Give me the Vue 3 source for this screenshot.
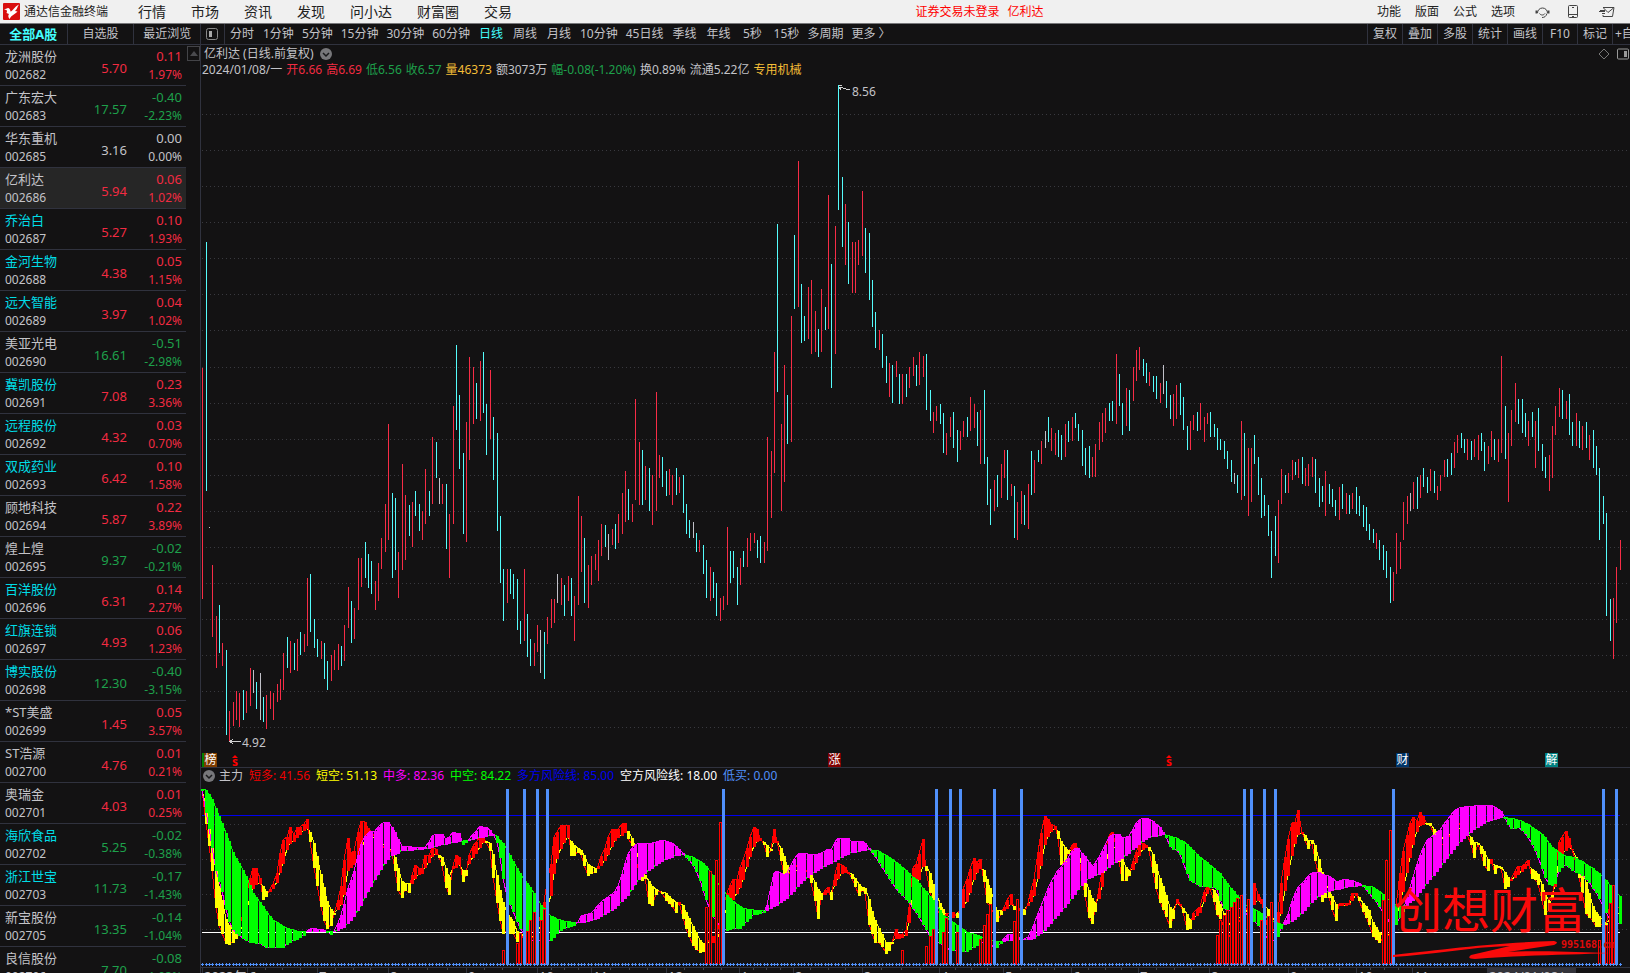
<template>
  <div class="terminal">
    <header class="menubar">
      <svg class="logo" viewBox="0 0 17 17" aria-hidden="true">
        <rect width="17" height="17" rx="1" fill="#d90f0f" />
        <path d="M1 6.500 L5 5 Q7 5 7.500 8.500 C10 8 11 4 16 1.500 C14 4 14.500 6 12 8 L14.500 8.500 C12 11.500 9 11.500 6.500 16 C5 14 5 12 6 11 L3.500 10 Q4.500 8 3.500 7 Z" fill="#fff" />
      </svg>
      <span class="brand">通达信金融终端</span>
      <nav class="menu">
        <a v-for="m in menus" :key="m" href="#">{{ m }}</a>
      </nav>
      <p class="login"><a href="#">证券交易未登录</a><a href="#">亿利达</a></p>
      <nav class="menu-right">
        <a v-for="m in rightMenus" :key="m" href="#">{{ m }}</a>
      </nav>
      <div class="menu-icons">
        <button aria-label="客服">
          <svg width="15" height="14" viewBox="0 0 15 14" fill="none" stroke="#444">
            <path d="M2.500 8 A5 5 0 1 1 12.500 8 M12 8.500 C11 11.500 9.500 12.500 7 12.500 M4.500 8.500 C6 10.500 8.500 10.500 10 8.500" />
            <path d="M1.500 5.500 v3 M13.500 5.500 v3" stroke-width="2" />
          </svg>
        </button>
        <button aria-label="手机">
          <svg width="10" height="14" viewBox="0 0 10 14" fill="none" stroke="#444">
            <rect x=".5" y=".5" width="9" height="12" rx="1" />
            <path d="M1 9.500 h8 M4 11.500 h2 M4 2.500 h2" />
          </svg>
        </button>
        <button aria-label="邮件">
          <svg width="16" height="12" viewBox="0 0 16 12" fill="none" stroke="#444">
            <path d="M4 1.500 H15 L13.500 10.500 H4 V9 M4.500 2 L9 6.500 L14.500 2 M1 4.500 h5 M0 5.500 h6 M3 7.500 h3" />
          </svg>
        </button>
      </div>
    </header>

    <div class="body">
      <aside class="sidebar">
        <div class="tabs">
          <button v-for="(t, i) in listTabs" :key="t" :class="{ active: i === 0 }">{{ t }}</button>
        </div>
        <div class="list">
          <table class="stocks">
            <tbody>
              <tr v-for="s in stocks" :key="s.code" :class="[s.dir, { current: s.code === '002686' }]">
                <td class="who">
                  <span :class="{ hot: s.hot }">{{ s.name }}</span>
                  <span>{{ s.code }}</span>
                </td>
                <td class="price">{{ s.price }}</td>
                <td class="chg">
                  <span>{{ s.change }}</span>
                  <span class="pct">{{ s.pct }}</span>
                </td>
              </tr>
            </tbody>
          </table>
          <button class="scroll-up" aria-label="向上滚动">
            <svg width="8" height="5" viewBox="0 0 8 5"><path d="M0 5 L4 0 L8 5 Z" fill="#4a4a4e" /></svg>
          </button>
        </div>
      </aside>

      <main class="stage">
        <div class="toolbar">
          <button class="fold" aria-label="侧栏">
            <svg width="12" height="12" viewBox="0 0 12 12">
              <rect x=".5" y=".5" width="11" height="11" rx="2" fill="none" stroke="#888" />
              <rect x="3" y="3" width="3" height="6" fill="#aaa" />
            </svg>
          </button>
          <div class="periods">
            <button v-for="p in periods" :key="p" :class="{ active: p === '日线' }">{{ p }}</button>
          </div>
          <div class="tools">
            <button v-for="t in tools" :key="t">{{ t }}</button>
          </div>
        </div>

        <section class="price-pane">
          <div class="pane-head">
            <div class="pane-title">
              <h1>亿利达 (日线.前复权)</h1>
              <svg class="chevron" viewBox="0 0 12 12">
                <circle cx="6" cy="6" r="6" fill="#77777a" />
                <path d="M3 5 L6 8 L9 5" fill="none" stroke="#19191b" stroke-width="1.500" />
              </svg>
              <span class="pane-icons">
                <svg width="12" height="12" viewBox="0 0 12 12"><path d="M6 1 L11 6 L6 11 L1 6 Z" fill="none" stroke="#777" /></svg>
                <svg width="12" height="12" viewBox="0 0 12 12">
                  <rect x=".5" y="1" width="11" height="10" rx="1" fill="none" stroke="#999" />
                  <rect x="7" y="3" width="3" height="6" fill="#999" />
                </svg>
              </span>
            </div>
            <p class="quote">
              <span v-for="q in quote" :key="q.text" :class="q.cls">{{ q.text }}</span>
            </p>
          </div>
          <div class="plot">
            <svg viewBox="201 80 1429 687" preserveAspectRatio="none" shape-rendering="crispEdges">
              <path :d="priceGrid" class="grid" />
              <path :d="candlePath('r')" fill="#f72c46" />
              <path :d="candlePath('c')" fill="#54fcfc" />
              <path :d="candlePath('w')" fill="#c0c0c8" />
              <path d="M838.500 85.500 H842 M839 87 L850 90 M839 87 L841 90 M229 741.500 H241 M230 741.500 L233 739 M230 741.500 L233 744" class="arrow" />
            </svg>
            <span
              v-for="l in labels"
              :key="l.text"
              class="extreme"
              :style="place(l)"
            >{{ l.text }}</span>
            <span
              v-for="m in markers"
              :key="m.x"
              :class="['marker', m.cls]"
              :style="place(m)"
            >{{ m.text }}</span>
          </div>
        </section>

        <section class="ind-pane">
          <p class="ind-head">
            <svg class="chevron" viewBox="0 0 12 12">
              <circle cx="6" cy="6" r="6" fill="#77777a" />
              <path d="M3 5 L6 8 L9 5" fill="none" stroke="#19191b" stroke-width="1.500" />
            </svg>
            <span>主力</span>
            <span v-for="v in values" :key="v.text" :class="v.cls">{{ v.text }}</span>
          </p>
          <div class="plot">
            <svg viewBox="201 785 1429 182" preserveAspectRatio="none" shape-rendering="crispEdges">
              <path :d="indGrid" class="grid" />
              <rect x="202" y="815" width="1418" height="1" fill="#0000f0" />
              <rect x="202" y="932" width="1418" height="1" fill="#fff" />
              <path :d="shortBand.slowLine" class="line" stroke="#ff0" />
              <path :d="shortBand.fastLine" class="line" stroke="#f00" />
              <path :d="shortBand.up" fill="#f00" />
              <path :d="shortBand.down" fill="#ff0" />
              <path :d="longBand.slowLine" class="line" stroke="#0f0" />
              <path :d="longBand.fastLine" class="line" stroke="#f0f" />
              <path :d="longBand.up" fill="#f0f" />
              <path :d="longBand.down" fill="#0f0" />
              <path :d="hollowPath" class="hollow" />
              <path :d="signalPath" fill="#5090fa" />
              <path :d="crossPath" fill="#5090fa" />
              <g fill="#fa0a0a" shape-rendering="auto">
                <path d="M1393 955 C1430 951 1490 943 1554 941 Q1560 942 1554 945 L1508 952 C1540 950 1580 952 1610 953 C1570 955 1520 955 1475 959 Q1466 959 1471 955 L1510 946 C1470 947 1430 955 1393 957 Z" />
              </g>
            </svg>
            <span class="watermark" :style="place({ x: 1394, y: 877 }, 785, 182)">创想财富</span>
            <span class="site" :style="place({ x: 1561, y: 938 }, 785, 182)">995168.cn</span>
          </div>
        </section>

        <div class="axis">
          <i v-for="t in minorTicks" :key="t" class="tick" :style="{ left: pct(t) }"></i>
          <span v-for="m in months" :key="m.x" :style="{ left: pct(m.x) }">{{ m.text }}</span>
          <span class="cursor-date" :style="{ left: pct(1487) }">2024/01/08/一</span>
        </div>
      </main>
    </div>
  </div>
</template>

<script setup>
const menus = ['行情', '市场', '资讯', '发现', '问小达', '财富圈', '交易']
const rightMenus = ['功能', '版面', '公式', '选项']
const listTabs = ['全部A股', '自选股', '最近浏览']
const periods = ['分时', '1分钟', '5分钟', '15分钟', '30分钟', '60分钟', '日线', '周线', '月线', '10分钟', '45日线', '季线', '年线', '5秒', '15秒', '多周期', '更多 〉']
const tools = ['复权', '叠加', '多股', '统计', '画线', 'F10', '标记', '+自']

const stocks = [
  ['龙洲股份', '002682', '5.70', '0.11', '1.97%'],
  ['广东宏大', '002683', '17.57', '-0.40', '-2.23%'],
  ['华东重机', '002685', '3.16', '0.00', '0.00%'],
  ['亿利达', '002686', '5.94', '0.06', '1.02%'],
  ['乔治白', '002687', '5.27', '0.10', '1.93%', true],
  ['金河生物', '002688', '4.38', '0.05', '1.15%', true],
  ['远大智能', '002689', '3.97', '0.04', '1.02%', true],
  ['美亚光电', '002690', '16.61', '-0.51', '-2.98%'],
  ['冀凯股份', '002691', '7.08', '0.23', '3.36%', true],
  ['远程股份', '002692', '4.32', '0.03', '0.70%', true],
  ['双成药业', '002693', '6.42', '0.10', '1.58%', true],
  ['顾地科技', '002694', '5.87', '0.22', '3.89%'],
  ['煌上煌', '002695', '9.37', '-0.02', '-0.21%'],
  ['百洋股份', '002696', '6.31', '0.14', '2.27%', true],
  ['红旗连锁', '002697', '4.93', '0.06', '1.23%', true],
  ['博实股份', '002698', '12.30', '-0.40', '-3.15%', true],
  ['*ST美盛', '002699', '1.45', '0.05', '3.57%'],
  ['ST浩源', '002700', '4.76', '0.01', '0.21%'],
  ['奥瑞金', '002701', '4.03', '0.01', '0.25%'],
  ['海欣食品', '002702', '5.25', '-0.02', '-0.38%', true],
  ['浙江世宝', '002703', '11.73', '-0.17', '-1.43%', true],
  ['新宝股份', '002705', '13.35', '-0.14', '-1.04%'],
  ['良信股份', '002706', '7.70', '-0.08', '-1.03%']
].map(([name, code, price, change, pct, hot]) => ({
  name, code, price, change, pct, hot,
  dir: Number(change) > 0 ? 'rise' : Number(change) < 0 ? 'fall' : 'flat'
}))

const quote = [
  { text: '2024/01/08/一' },
  { text: '开6.66', cls: 'q-red' },
  { text: '高6.69', cls: 'q-red' },
  { text: '低6.56', cls: 'q-green' },
  { text: '收6.57', cls: 'q-green' },
  { text: '量46373', cls: 'q-gold' },
  { text: '额3073万' },
  { text: '幅-0.08(-1.20%)', cls: 'q-green' },
  { text: '换0.89%' },
  { text: '流通5.22亿' },
  { text: '专用机械', cls: 'q-gold' }
]

const values = [
  { text: '短多: 41.56', cls: 'v-red' },
  { text: '短空: 51.13', cls: 'v-yellow' },
  { text: '中多: 82.36', cls: 'v-magenta' },
  { text: '中空: 84.22', cls: 'v-green' },
  { text: '多方风险线: 85.00', cls: 'v-blue' },
  { text: '空方风险线: 18.00', cls: 'v-white' },
  { text: '低买: 0.00', cls: 'v-sky' }
]

const labels = [
  { text: '8.56', x: 852, y: 83 },
  { text: '4.92', x: 242, y: 734 }
]
const markers = [
  { text: '榜', x: 202, y: 753, cls: 'm-brown' },
  { text: 's', x: 231, y: 755, cls: 'm-s' },
  { text: '涨', x: 828, y: 753, cls: 'm-red' },
  { text: 's', x: 1165, y: 755, cls: 'm-s' },
  { text: '财', x: 1396, y: 753, cls: 'm-navy' },
  { text: '解', x: 1545, y: 753, cls: 'm-teal' }
]

const months = [
  [202, '2023年'], [247, '6'], [317, '7'], [388, '8'], [466, '9'], [537, '10'], [591, '11'], [666, '12'],
  [739, '1'], [793, '2'], [862, '3'], [939, '4'], [1003, '5'], [1071, '6'], [1138, '7'], [1209, '8'],
  [1288, '9'], [1356, '10'], [1412, '11']
].map(([x, text]) => ({ x, text }))
const minorTicks = months.slice(1, -1).flatMap((m, i) => {
  const step = (months[i + 2].x - m.x) / 4
  return [1, 2, 3].map(n => Math.round(m.x + n * step))
})

const pct = x => `${((x - 201) / 1429) * 100}%`
function place(p, top = 80, height = 687) {
  return { left: pct(p.x), top: `${((p.y - top) / height) * 100}%` }
}

// each bar: direction + x, high, low
const candles = `
r202,368,599 c206,242,491 w209,527,528 r212,565,637 r216,616,668 c219,605,653 r222,643,666 c226,650,735 r229,711,742 r233,702,726
r236,691,720 r239,693,727 c243,690,720 r246,691,713 r250,668,706 w253,670,693 c256,682,709 w260,673,720 c263,697,722 r266,695,729
r270,691,709 r273,693,720 r277,684,702 r280,679,700 r283,653,690 c287,637,668 r290,641,673 c294,643,670 r297,639,671 c300,632,655
r304,634,652 r307,578,646 c310,574,632 c314,619,648 c317,639,657 r321,641,659 c324,643,679 c327,661,690 r331,655,681 r334,650,670
r338,644,670 c341,646,666 r344,625,661 r348,587,628 c351,601,643 r354,608,639 r358,558,610 r361,558,587 c365,542,578 c368,554,588
c371,561,594 r375,581,610 r378,563,601 r381,538,569 r385,504,552 r388,424,540 c392,493,578 c395,498,570 r398,552,598 r402,464,570
r405,495,560 c409,505,536 r412,502,547 c415,491,516 c419,504,531 r422,511,540 r425,469,524 c429,491,516 r432,437,504 c436,442,478
w439,478,504 r442,484,504 c446,484,549 r449,514,578 r453,406,524 c456,345,430 c459,395,469 c463,453,534 r466,422,542 r469,357,460
r473,367,424 c476,383,419 r480,361,421 c483,352,413 c486,404,455 r490,370,439 c493,417,480 c497,433,531 c500,516,583 c503,569,621
r507,569,603 c510,569,594 c513,574,599 c517,579,630 c520,621,644 r524,569,641 c527,614,657 c530,639,666 r534,643,666 r537,625,652
w540,630,673 c544,632,679 r547,617,644 r551,599,628 r554,599,623 w557,574,603 r561,578,605 c564,585,616 r568,576,601 c571,578,616
r574,596,641 r578,496,605 r581,516,572 c584,538,603 r588,565,608 r591,556,585 r595,554,570 r598,540,581 r601,524,556 c605,525,547
w608,534,560 r612,529,545 c615,524,549 r618,514,543 r622,493,534 r625,471,522 c628,489,520 r632,504,522 r635,399,500 r639,442,505
c642,450,505 r645,466,500 c649,468,511 r652,475,525 r656,392,511 r659,455,478 c662,457,487 c666,471,496 r669,469,495 r672,475,505
c676,468,495 r679,477,493 c683,475,513 c686,504,534 c689,520,538 w693,522,538 c696,533,552 r699,540,552 c703,545,574 c706,560,598
r710,567,601 c713,572,598 c716,583,616 r720,598,621 r723,596,610 r727,527,605 c730,551,583 c733,551,578 c737,567,605 r740,558,585
c743,551,567 r747,538,567 r750,533,551 r754,533,543 c757,540,558 c760,536,563 r764,542,563 r767,437,551 r771,451,518 r774,352,473
c777,224,392 r781,424,511 r784,365,482 c787,395,444 r791,316,442 c794,235,309 r798,161,307 c801,284,343 c804,316,341 r808,287,339
r811,280,354 r815,311,352 c818,329,357 r821,289,352 c825,307,330 r828,195,329 c831,264,388 r835,226,354 c838,85,210 c842,177,247
r845,204,265 c848,222,284 r852,242,293 r855,242,293 r858,240,265 r862,191,256 c865,228,273 c869,233,300 c872,280,327 c875,312,348
r879,330,350 c882,334,368 c886,356,383 r889,363,397 c892,365,403 r896,361,377 c899,374,404 r902,374,404 c906,374,397 r909,367,388
r913,357,376 c916,365,386 r919,352,385 r923,356,377 c926,354,410 c930,390,421 r933,412,433 r936,406,421 c940,404,424 c943,413,453
r946,433,455 r950,417,437 c953,412,448 c957,430,462 r960,431,450 r963,421,437 c967,417,437 r970,397,431 r974,404,428 c977,412,446
r980,410,464 c984,390,464 c987,457,505 c990,489,525 r994,480,511 c997,475,507 r1001,464,498 r1004,450,478 c1007,450,500 r1011,484,496
c1014,486,538 r1017,502,540 r1021,491,524 c1024,495,525 r1028,484,529 c1031,451,495 r1034,460,493 c1038,450,462 r1041,441,464
w1045,431,448 c1048,417,442 r1051,428,451 r1055,433,455 c1058,430,457 c1061,435,460 r1065,424,457 c1068,421,442 r1072,417,441
c1075,413,428 c1078,424,441 c1082,430,466 c1085,448,475 c1089,446,478 r1092,457,477 r1095,444,477 r1099,422,450 r1102,413,442
r1105,408,433 c1109,403,421 c1112,401,421 r1116,354,424 c1119,374,406 c1122,403,435 r1126,388,426 c1129,390,431 r1133,367,401
r1136,350,381 r1139,347,370 c1143,359,376 c1146,363,383 r1149,372,386 c1153,376,392 c1156,376,399 r1160,383,403 w1163,365,394
c1166,381,408 c1170,395,419 r1173,394,426 r1176,385,419 c1180,383,415 c1183,397,430 c1187,426,450 r1190,421,450 r1193,415,430
c1197,412,431 r1200,403,430 r1204,417,442 r1207,413,424 c1210,412,437 c1214,424,437 c1217,428,450 c1220,439,450 c1224,441,459
c1227,451,469 c1231,460,482 w1234,473,484 c1237,475,493 r1241,421,500 c1244,433,496 r1248,448,516 r1251,448,502 c1254,435,464
c1258,457,495 c1261,478,518 c1264,495,516 c1268,505,536 c1271,531,578 c1275,516,556 r1278,500,563 r1281,469,504 c1285,475,493
r1288,473,493 r1292,460,480 c1295,462,475 r1298,459,478 c1302,457,484 r1305,468,486 r1308,464,486 r1312,457,477 c1315,459,493
c1319,478,507 c1322,486,502 r1325,471,516 c1329,484,504 c1332,489,507 c1335,500,516 r1339,487,520 c1342,484,509 r1346,493,514
c1349,495,514 r1352,493,509 c1356,487,514 c1359,496,516 c1363,505,527 c1366,507,531 c1369,524,540 c1373,529,543 r1376,533,549
c1379,540,560 c1383,545,570 c1386,551,578 c1390,567,603 r1393,572,601 r1396,533,574 r1400,542,569 r1403,502,540 r1407,496,524
w1410,493,511 r1413,482,509 c1417,477,509 r1420,475,498 c1423,468,487 c1427,477,493 r1430,469,491 c1434,471,493 r1437,486,500
r1440,475,491 r1444,460,477 c1447,459,477 c1451,453,475 r1454,442,468 r1457,435,453 c1461,433,448 c1464,439,453 r1467,439,460
c1471,441,460 r1474,439,457 r1478,435,460 c1481,433,451 c1484,442,471 r1488,446,464 r1491,431,457 c1494,439,460 r1498,439,462
r1501,356,453 c1505,406,459 r1508,433,502 r1511,410,446 r1515,383,422 c1518,399,424 c1522,399,433 c1525,413,437 r1528,421,446
c1532,412,437 r1535,421,468 c1538,408,451 c1542,444,471 c1545,457,478 r1549,455,491 r1552,426,478 r1555,406,435 r1559,388,417
c1562,390,419 r1566,401,419 c1569,394,435 c1572,422,446 r1576,413,446 c1579,421,448 r1582,426,450 c1586,422,448 r1589,435,460
c1593,430,468 c1596,446,475 c1599,468,540 c1603,496,524 c1606,513,616 c1610,599,641 r1613,598,659 r1616,567,623 r1620,540,570
`.trim().split(/\s+/).map(s => {
  const [x, high, low] = s.slice(1).split(',').map(Number)
  return { dir: s[0], x, high, low }
})

function candlePath(dir) {
  return candles
    .filter(c => c.dir === dir)
    .map(c => `M${c.x} ${c.high}h1V${c.low}h-1z`)
    .join('')
}

const dotted = ys => ys.map(y => `M202 ${y}.5H1629`).join('')
const priceGrid = dotted([114, 150, 186, 222, 258, 294, 330, 367, 403, 439, 475, 511, 547, 583, 619, 655, 691, 727])
const indGrid = dotted([824, 859, 894, 929])

// control points of the oscillator curves, in thirds of a pixel from each section's origin
const origins = [0, 400, 800, 1210]
function curve(sections) {
  return sections.flatMap((text, n) =>
    text.trim().split(/\s+/).map(p => {
      const [x, ...ys] = p.split(',').map(Number)
      return [origins[n] + x / 3, ...ys.map(y => 740 + y / 3)]
    })
  )
}

const longFast = curve([
  `606,150 615,200 630,280 640,350 650,400 665,450 680,515 690,555 710,580 740,603 780,610 800,622 850,622 870,605 900,592 918,580
  924,568 940,565 978,570 984,582 996,583 1008,560 1020,535 1030,500 1045,440 1060,400 1068,370 1080,320 1093,290 1110,272 1125,272
  1140,255 1158,243 1170,250 1185,275 1195,300 1199,315`,
  `5,318 40,320 80,320 95,290 110,281 130,283 140,300 160,276 180,280 190,315 200,305 210,292 240,258 260,262 275,275 290,300 300,350
  310,420 320,470 335,505 350,540 365,575 390,600 430,600 450,603 480,570 500,560 520,558 535,545 545,525 560,523 580,515 600,487
  620,475 640,460 655,435 665,405 680,350 695,325 710,310 760,310 780,300 810,305 830,320 845,335 857,350 880,375 900,420 915,470
  930,510 945,540 975,573 1000,563 1020,563 1040,545 1060,522 1080,520 1095,515 1105,480 1120,400 1135,390 1150,405 1165,395
  1180,360 1195,340`,
  `0,340 60,342 85,325 95,330 110,295 140,292 155,305 190,303 205,320 215,335 240,370 270,420 300,460 330,490 360,535 390,590 420,610
  450,630 500,635 530,615 560,603 585,625 605,608 615,588 640,580 660,597 680,597 695,570 710,530 730,480 750,430 770,395 800,360
  820,325 835,325 860,355 875,378 890,365 910,325 930,285 955,280 970,295 990,285 1010,245 1025,235 1045,235 1060,245 1080,262
  1095,283 1115,328 1135,330 1150,370 1170,420 1200,438 1228,438`,
  `0,440 20,442 35,500 55,515 75,500 90,505 130,540 150,560 180,605 200,600 207,580 218,553 235,520 250,470 265,440 280,425 300,400
  320,393 340,403 360,408 380,425 400,417 430,420 450,432 460,438 480,463 500,485 515,512 530,525 545,565 560,550 580,510 600,440
  615,390 630,345 650,300 670,285 690,270 710,240 730,215 745,203 775,197 800,198 810,193 830,197 845,193 860,205 875,215 885,233
  900,263 930,262 950,285 970,320 990,365 1005,410 1020,437 1035,430 1050,385 1070,375 1090,395 1110,400 1140,430 1160,460
  1180,500 1200,540 1215,555 1232,548`
])
const longSlow = curve([
  `606,148 620,152 630,165 640,185 650,208 660,235 680,285 700,340 720,375 740,410 760,460 780,485 800,515 820,540 840,553 860,563
  880,570 900,573 940,574 980,573 1000,573 1015,570 1040,555 1060,530 1080,500 1100,460 1118,430 1135,400 1150,375 1165,355
  1180,343 1199,338`,
  `0,332 80,325 130,312 180,303 220,297 250,290 270,285 290,288 310,310 330,345 360,400 390,440 420,490 450,525 480,540 530,547
  560,545 590,535 620,520 650,500 680,470 710,425 740,395 770,375 800,355 830,345 850,343 880,352 910,370 940,405 960,440 980,465
  1000,483 1030,505 1060,510 1095,512 1130,495 1160,475 1190,445`,
  `0,430 30,405 60,385 100,365 150,338 200,328 230,330 260,345 300,375 350,420 400,480 430,525 470,555 500,575 550,593 580,603
  600,605 640,598 680,597 700,595 730,575 760,540 800,495 840,440 870,412 900,400 940,370 980,345 1020,310 1050,290 1090,283
  1130,293 1160,310 1200,350 1228,370`,
  `0,375 30,400 60,440 90,475 110,500 140,510 170,530 200,550 225,553 250,540 280,515 310,480 340,458 370,450 410,440 455,435
  490,442 520,462 545,490 570,500 590,495 620,470 650,430 680,395 710,355 740,315 770,285 800,262 840,240 880,230 910,237 940,245
  970,262 1000,285 1030,325 1060,345 1100,355 1130,372 1170,400 1200,435 1232,470`
])

// x, fast, slow
const shortPoints = curve([
  `606,150,150 615,225,180 625,300,240 635,380,310 645,480,375 655,550,430 670,590,500 680,612,545 690,610,560 705,605,575
  712,580,580 725,540,570 745,440,490 755,385,450 770,383,430 785,430,430 790,487,440 800,465,455 815,440,450 830,405,430
  840,340,395 850,295,365 862,290,325 870,262,310 880,290,305 892,257,290 905,265,275 922,235,262 928,290,270 940,370,300
  950,430,345 960,480,390 970,535,430 980,565,480 990,567,505 1000,530,515 1008,500,525 1015,475,505 1025,430,490 1035,330,450
  1045,290,385 1055,350,380 1065,325,370 1075,270,350 1085,237,320 1095,245,300 1105,265,290 1120,285,290 1150,325,315
  1165,325,318 1180,345,345 1187,410,355 1197,467,395`,
  `7,472,425 15,450,430 27,455,430 36,405,430 45,375,415 60,385,400 70,385,400 75,345,380 85,350,370 95,325,350 105,320,343
  115,345,343 125,370,350 135,425,370 143,465,405 150,460,415 158,380,385 168,345,380 178,350,370 190,430,395 200,400,390
  207,345,370 220,315,350 230,305,335 240,290,320 250,290,305 260,310,302 270,330,310 280,420,345 290,480,400 300,540,450
  310,583,490 318,570,510 330,580,530 340,580,545 352,605,575 365,600,580 375,580,590 400,600,590 430,500,550 445,400,490
  455,365,460 462,290,400 472,275,350 485,253,320 495,260,300 505,253,290 512,345,300 525,345,320 540,330,325 550,370,340
  565,408,375 575,395,380 590,395,388 600,350,375 610,345,370 620,300,350 635,265,320 645,270,300 655,268,290 668,248,285
  678,250,270 685,300,275 700,322,300 715,390,350 725,420,400 735,415,405 748,495,425 758,495,440 770,455,448 780,450,455
  790,465,455 800,485,460 815,495,475 828,515,485 838,482,492 850,540,495 860,570,520 875,610,550 890,630,580 905,640,610
  915,620,610 925,605,605 938,587,605 950,590,605 965,520,560 980,460,500 990,435,480 1000,415,478 1010,420,460 1020,380,440
  1035,345,400 1045,310,365 1055,270,330 1068,255,305 1078,290,300 1090,305,303 1102,352,315 1115,325,330 1122,268,305
  1130,300,305 1140,340,315 1150,405,340 1160,412,375 1175,390,395 1195,375,390`,
  `15,380,390 35,430,405 45,480,425 55,540,450 65,460,462 75,450,462 85,440,455 95,485,455 103,410,440 115,365,410 125,375,400
  135,380,395 150,408,400 160,420,405 175,470,430 185,450,440 195,460,445 205,545,470 215,575,510 225,605,540 240,605,570
  258,640,605 270,625,605 280,600,608 290,560,590 300,595,595 310,575,590 320,570,585 328,490,540 340,375,450 350,370,430
  360,330,410 370,292,375 380,415,380 390,455,400 400,485,435 415,520,480 430,530,510 440,520,530 460,515,530 475,535,515
  490,440,500 502,415,480 515,370,440 525,345,405 533,375,395 543,348,380 553,430,390 563,500,425 575,500,455 590,545,510
  605,520,515 620,480,505 635,458,490 645,530,500 655,500,510 665,510,505 675,525,510 685,485,495 695,440,480 705,405,460
  715,330,410 725,265,365 737,220,300 745,240,285 755,255,270 768,260,265 775,300,275 785,390,310 800,350,325 810,320,335
  825,310,330 835,330,330 850,445,400 860,490,425 870,548,460 880,548,485 890,480,490 900,430,465 910,370,420 920,300,340
  935,275,320 945,300,315 955,350,330 967,425,355 980,420,385 990,400,395 1000,360,385 1010,330,360 1020,310,340 1035,310,320
  1047,330,320 1060,400,345 1070,455,380 1080,485,415 1095,520,455 1110,560,500 1120,530,510 1130,475,490 1142,495,495
  1150,520,505 1160,568,520 1170,565,540 1180,515,535 1200,500,515 1210,460,490 1220,438,460`,
  `5,450,442 20,520,460 33,540,500 60,600,560 100,520,520 115,500,510 133,425,490 143,460,480 155,480,490 170,560,500
  190,590,540 205,510,550 215,410,510 225,350,450 235,290,400 245,250,350 255,245,310 265,207,280 272,265,278 285,300,285
  295,325,300 305,305,300 315,360,315 325,395,350 337,490,400 350,460,440 360,475,455 375,558,490 388,485,495 400,490,495
  420,490,492 430,440,470 440,465,465 450,485,475 460,515,490 475,545,505 490,590,550 510,610,580 525,590,590 535,600,590
  550,550,570 560,490,530 570,400,490 580,325,450 590,290,400 600,250,350 612,225,300 620,245,275 630,217,255 640,230,250
  650,250,248 660,255,250 675,290,270 700,320,300 745,240,260 780,300,285 792,350,305 805,310,310 815,345,320 825,390,340
  835,390,360 845,350,370 855,400,375 865,380,378 875,385,380 887,455,400 900,425,420 910,400,415 925,375,400 940,380,390
  955,360,375 965,415,385 980,420,395 990,450,415 1005,522,460 1018,510,485 1028,460,460 1040,380,420 1048,295,350
  1058,290,340 1068,272,330 1080,300,318 1090,345,335 1100,375,355 1115,450,390 1130,530,430 1145,535,490 1160,563,520
  1175,550,535 1190,560,550 1200,490,540 1215,500,520`
])

function valueAt(points, x, k = 1) {
  const i = points.findIndex(p => p[0] >= x)
  if (i === 0) return points[0][k]
  if (i < 0) return points[points.length - 1][k]
  const a = points[i - 1]
  const b = points[i]
  return a[k] + ((b[k] - a[k]) * (x - a[0])) / (b[0] - a[0])
}

const barXs = Array.from({ length: 420 }, (_, i) => Math.floor(202.7 + 3.383 * i))

function band(fastAt, slowAt) {
  let up = ''
  let down = ''
  let fastLine = ''
  let slowLine = ''
  barXs.forEach((x, i) => {
    const f = Math.round(fastAt(x))
    const s = Math.round(slowAt(x))
    const cmd = i ? 'L' : 'M'
    if (f <= s) up += `M${x - 1} ${f}h3V${s + 1}h-3z`
    else down += `M${x - 1} ${s}h3V${f + 1}h-3z`
    fastLine += `${cmd}${x} ${f}`
    slowLine += `${cmd}${x} ${s}`
  })
  return { up, down, fastLine, slowLine }
}

const shortBand = band(x => valueAt(shortPoints, x, 1), x => valueAt(shortPoints, x, 2))
const longBand = band(x => valueAt(longFast, x), x => valueAt(longSlow, x))

const hollow = [
  [503, 950], [517, 943], [520, 933], [527, 931], [530, 920], [534, 912], [541, 920], [544, 909], [547, 898],
  [706, 907], [710, 871], [716, 860], [720, 822], [902, 950], [926, 946], [930, 936], [933, 929], [943, 932],
  [946, 918], [957, 932], [980, 939], [984, 925], [987, 914], [990, 904], [1014, 921], [1017, 899], [1217, 935],
  [1220, 920], [1224, 915], [1227, 910], [1231, 907], [1234, 902], [1237, 898], [1241, 895], [1248, 899],
  [1261, 920], [1268, 916], [1271, 902], [1383, 900], [1386, 860], [1390, 830], [1599, 940], [1606, 925],
  [1610, 903], [1613, 885]
]
const hollowPath = hollow.map(([x, y]) => `M${x - 1}.5 965V${y}.5h2V965`).join('')

const signals = [507, 524, 537, 547, 723, 936, 950, 960, 994, 1021, 1244, 1251, 1264, 1275, 1393, 1603, 1616]
const signalPath = signals.map(x => `M${x - 1} 789h3V965h-3z`).join('')
const crossPath = barXs.map(x => `M${x - 1} 964h3v1h-3zM${x} 963h1v3h-1z`).join('')
</script>

<style>
body { background: #131213; overflow: hidden; }
</style>

<style scoped>
.terminal { display: flex; flex-direction: column; height: 100vh; overflow: hidden; background: #131213; color: #c3c3c8; font: 12px/18px "Noto Sans", "Noto Sans CJK SC", sans-serif; }
button { border: 0; margin: 0; padding: 0; background: none; color: inherit; font: inherit; white-space: nowrap; cursor: pointer; }
a { color: inherit; text-decoration: none; }
p, h1 { margin: 0; font: inherit; }
svg { display: block; }

.menubar { display: flex; align-items: center; flex: none; height: 23px; padding-left: 3px; background: #f0f0f0; border-bottom: 1px solid #77777a; color: #222; white-space: nowrap; }
.logo { width: 17px; height: 17px; margin-right: 4px; }
.brand { width: 114px; }
.menu { display: flex; gap: 25px; font-size: 14px; }
.login { display: flex; gap: 8px; margin: 0 auto; padding-left: 70px; color: #f00; }
.menu-right { display: flex; gap: 14px; }
.menu-icons { display: flex; align-items: center; width: 95px; padding-left: 20px; gap: 18px; }
.menu-icons button:last-child { margin-left: 3px; }

.body { display: grid; grid-template-columns: 201px minmax(0, 1fr); flex: 1; min-height: 0; }
.sidebar { display: flex; flex-direction: column; min-height: 0; border-right: 1px solid #30323e; }
.tabs { display: grid; grid-template-columns: repeat(3, 1fr); flex: none; height: 20px; border-bottom: 1px solid #30323e; }
.tabs button + button { border-left: 1px solid #30323e; }
.tabs .active, .periods .active { color: #4ff; }
.tabs .active { font-size: 13px; font-weight: bold; }
.list { display: flex; align-items: flex-start; flex: 1; min-height: 0; overflow: hidden; }
.stocks { flex: none; width: 186px; table-layout: fixed; border-collapse: separate; border-spacing: 0; }
.stocks td { height: 37px; padding: 3px 0 0; border-bottom: 1px solid #30323e; vertical-align: top; }
.stocks span { display: block; }
.stocks .who { width: 75px; padding-left: 5px; white-space: nowrap; }
.stocks .who span:first-child { font-size: 13px; line-height: 17px; }
.stocks .who span:last-child { line-height: 20px; }
.who .hot { color: #00dce6; }
.stocks .price { width: 47px; height: 26px; padding-top: 14px; text-align: right; font-size: 13px; }
.stocks .chg { padding-right: 4px; text-align: right; font-size: 13px; }
.chg span:first-child { line-height: 17px; }
.chg .pct { font-size: 12px; line-height: 20px; }
.rise .price, .rise .chg { color: #f22b42; }
.fall .price, .fall .chg { color: #1ea04b; }
.current td { background: #262626; }
.scroll-up { display: flex; align-items: center; justify-content: center; width: 13px; height: 15px; margin: 1px 0 0 1px; border: 1px solid #444448; }

.stage { display: flex; flex-direction: column; min-width: 0; min-height: 0; }
.toolbar { display: flex; flex: none; height: 20px; border-bottom: 1px solid #30323e; }
.fold { display: flex; align-items: center; width: 24px; padding-left: 5px; border-right: 1px solid #30323e; }
.periods { display: flex; gap: 8px; margin-left: 4px; }
.periods button { min-width: 26px; }
.tools { display: flex; margin-left: auto; }
.tools button { width: 35px; border-left: 1px solid #30323e; }
.tools button:last-child { width: 18px; padding-left: 2px; overflow: hidden; text-align: left; }

.price-pane { display: flex; flex-direction: column; flex: 1; min-height: 0; border-bottom: 1px solid #30323e; }
.pane-head { height: 35px; flex: none; }
.pane-title { display: flex; align-items: center; height: 17px; padding: 0 1px 0 3px; gap: 6px; }
.chevron { width: 12px; height: 12px; flex: none; }
.pane-icons { display: flex; gap: 7px; margin-left: auto; }
.quote { display: flex; gap: 4px; height: 18px; line-height: 16px; padding-left: 1px; white-space: nowrap; }
.q-red { color: #f22b42; }
.q-green { color: #1ea04b; }
.q-gold { color: #f5be37; }

.plot { position: relative; flex: 1; min-height: 0; }
.plot > svg { position: absolute; width: 100%; height: 100%; }
.grid { stroke: #39393f; stroke-dasharray: 1 3; fill: none; }
.arrow { stroke: #d0d0d0; fill: none; }
.line { fill: none; stroke-width: 1; }
.hollow { fill: #131213; stroke: #f00; }
.extreme { position: absolute; }
.marker { position: absolute; width: 13px; height: 14px; color: #fff; font-size: 12px; line-height: 14px; text-align: center; }
.m-brown { background: #7d3c00; border-left: 2px solid #008000; }
.m-red { background: #800000; }
.m-navy { background: #003468; }
.m-teal { background: #008080; }
.m-s { width: 8px; color: #f00; font-weight: bold; }
.m-s::before { content: ""; position: absolute; top: 0; left: 1px; border: 3px solid transparent; border-top: 0; border-bottom-color: #f00; }

.ind-pane { display: flex; flex-direction: column; flex: none; height: 199px; }
.ind-head { display: flex; flex: none; gap: 6px; height: 17px; padding-left: 2px; line-height: 16px; white-space: nowrap; }
.ind-head .chevron { margin: 2px -2px 0 0; }
.v-red { color: #f00000; }
.v-yellow { color: #ff0; }
.v-magenta { color: #f0f; }
.v-green { color: #0f0; }
.v-blue { color: #0000f0; }
.v-white { color: #fff; }
.v-sky { color: #5090fa; }
.watermark { position: absolute; color: #fa0a0a; font: 48px/60px "Noto Sans CJK SC", sans-serif; white-space: nowrap; }
.site { position: absolute; color: #e00a0a; font: bold 10px/14px "DejaVu Sans Mono", monospace; }

.axis { position: relative; flex: none; height: 5px; border-top: 1px solid #30323e; overflow: hidden; font-size: 13px; line-height: 16px; }
.axis span { position: absolute; top: 0; padding-left: 1px; border-left: 1px solid #30323e; white-space: nowrap; }
.axis .tick { position: absolute; top: 0; width: 1px; height: 2px; background: #44464f; }
.axis .cursor-date { background: #33333a; }
</style>
